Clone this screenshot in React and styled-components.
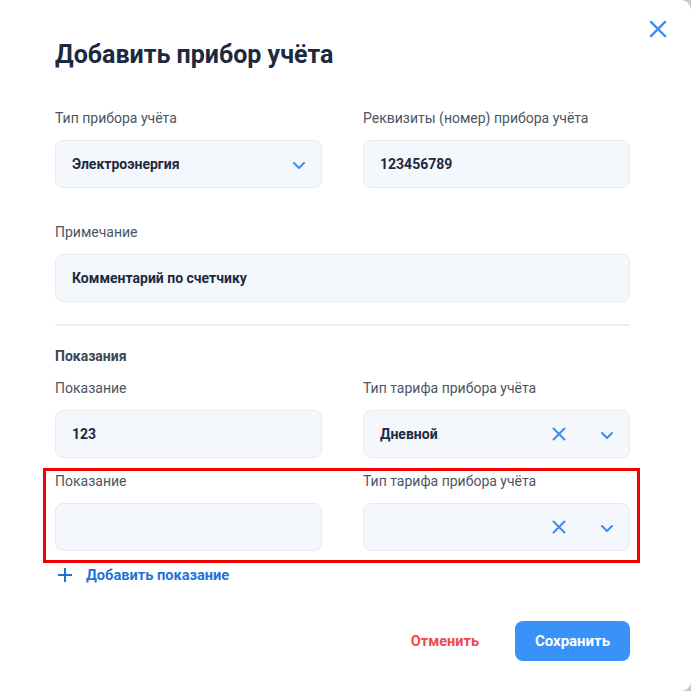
import React from "react";
import styled, { createGlobalStyle } from "styled-components";

const Global = createGlobalStyle`
  html, body { margin: 0; padding: 0; background: #c4c9d2; }
  body { font-family: Roboto, "Liberation Sans", Arial, sans-serif; }
  * { box-sizing: border-box; }
`;

const Modal = styled.div`
  position: relative;
  width: 691px;
  height: 691px;
  background: #fff;
  border-radius: 0 10px 10px 0;
  padding: 39px 61px 30px 55px;
  display: flex;
  flex-direction: column;
`;

const Close = styled.button`
  position: absolute;
  top: 20px;
  right: 24px;
  width: 18px;
  height: 18px;
  padding: 0;
  border: none;
  background: none;
  cursor: pointer;
  display: flex;
`;

const Title = styled.h1`
  margin: 0;
  font-size: 25px;
  line-height: 32px;
  font-weight: 700;
  color: #1c2a40;
`;

const Grid = styled.div`
  display: grid;
  grid-template-columns: 1fr 1fr;
  column-gap: 41px;
  margin-top: ${(p) => p.$mt || 0}px;
`;

const Field = styled.div`
  display: flex;
  flex-direction: column;
  gap: 12px;
  grid-column: ${(p) => (p.$full ? "1 / -1" : "auto")};
`;

const Label = styled.div`
  font-size: 14px;
  line-height: 20px;
  color: #4b5563;
`;

const Box = styled.div`
  height: 48px;
  border-radius: 8px;
  background: #f4f7fb;
  border: 1px solid #e6ebf1;
  display: flex;
  align-items: center;
  padding: 0 14px 0 16px;
`;

const Value = styled.div`
  flex: 1;
  font-size: 14px;
  font-weight: 700;
  color: #1c2a40;
`;

const IconSlot = styled.span`
  display: flex;
  align-items: center;
  justify-content: center;
  width: 16px;
  margin-right: ${(p) => p.$mr || 0}px;
  position: relative;
  top: ${(p) => p.$dy || 0}px;
`;

const Divider = styled.hr`
  margin: 22px 0 0;
  border: none;
  height: 2px;
  background: #efefef;
`;

const Section = styled.div`
  margin-top: 20px;
  font-size: 14px;
  line-height: 20px;
  font-weight: 700;
  color: #3a4556;
`;

const Highlight = styled.div`
  margin: 10px -10px 0 -12px;
  padding: 0 7px 9px 9px;
  border: 3px solid #f00000;
`;

const AddLink = styled.button`
  margin-top: 2px;
  align-self: flex-start;
  display: flex;
  align-items: center;
  gap: 13px;
  padding: 0 0 0 2px;
  border: none;
  background: none;
  font-family: inherit;
  font-size: 14.6px;
  font-weight: 700;
  line-height: 20px;
  color: #1d73d6;
  cursor: pointer;
`;

const Footer = styled.div`
  margin-top: auto;
  display: flex;
  justify-content: flex-end;
  align-items: center;
  gap: 36px;
`;

const CancelBtn = styled.button`
  border: none;
  background: none;
  padding: 0;
  font-family: inherit;
  font-size: 14.5px;
  font-weight: 700;
  color: #f4474c;
  cursor: pointer;
`;

const SaveBtn = styled.button`
  width: 115px;
  height: 40px;
  border: none;
  border-radius: 8px;
  background: #3892f8;
  color: #fff;
  font-family: inherit;
  font-size: 15px;
  font-weight: 700;
  cursor: pointer;
`;

const Chevron = () => (
  <svg width="14" height="9" viewBox="0 0 14 9" fill="none">
    <path d="M2 2l5 5 5-5" stroke="#3b8ff3" strokeWidth="2" strokeLinecap="round" strokeLinejoin="round" />
  </svg>
);

const Cross = ({ size = 14, w = 2 }) => (
  <svg width={size} height={size} viewBox="0 0 14 14" fill="none">
    <path d="M1.5 1.5l11 11M12.5 1.5l-11 11" stroke="#3b8ff3" strokeWidth={w} strokeLinecap="round" />
  </svg>
);

const Plus = () => (
  <svg width="16" height="16" viewBox="0 0 16 16" fill="none">
    <path d="M8 1v14M1 8h14" stroke="#1d73d6" strokeWidth="2" />
  </svg>
);

const TariffRow = ({ reading, tariff }) => (
  <Grid>
    <Field>
      <Label>Показание</Label>
      <Box>
        <Value>{reading}</Value>
      </Box>
    </Field>
    <Field>
      <Label>Тип тарифа прибора учёта</Label>
      <Box>
        <Value>{tariff}</Value>
        <IconSlot $mr={32}>
          <Cross size={14} />
        </IconSlot>
        <IconSlot $dy={1}>
          <Chevron />
        </IconSlot>
      </Box>
    </Field>
  </Grid>
);

export default function App() {
  return (
    <>
      <Global />
      <Modal>
        <Close aria-label="Закрыть">
          <Cross size={18} w={1.8} />
        </Close>
        <Title>Добавить прибор учёта</Title>
        <Grid $mt={37}>
          <Field>
            <Label>Тип прибора учёта</Label>
            <Box>
              <Value>Электроэнергия</Value>
              <IconSlot $dy={1}>
                <Chevron />
              </IconSlot>
            </Box>
          </Field>
          <Field>
            <Label>Реквизиты (номер) прибора учёта</Label>
            <Box>
              <Value>123456789</Value>
            </Box>
          </Field>
        </Grid>
        <Grid $mt={34}>
          <Field $full>
            <Label>Примечание</Label>
            <Box>
              <Value>Комментарий по счетчику</Value>
            </Box>
          </Field>
        </Grid>
        <Divider />
        <Section>Показания</Section>
        <Grid $mt={12}>
          <Field>
            <Label>Показание</Label>
            <Box>
              <Value>123</Value>
            </Box>
          </Field>
          <Field>
            <Label>Тип тарифа прибора учёта</Label>
            <Box>
              <Value>Дневной</Value>
              <IconSlot $mr={32}>
                <Cross size={14} />
              </IconSlot>
              <IconSlot $dy={1}>
                <Chevron />
              </IconSlot>
            </Box>
          </Field>
        </Grid>
        <Highlight>
          <TariffRow reading="" tariff="" />
        </Highlight>
        <AddLink>
          <Plus />
          Добавить показание
        </AddLink>
        <Footer>
          <CancelBtn>Отменить</CancelBtn>
          <SaveBtn>Сохранить</SaveBtn>
        </Footer>
      </Modal>
    </>
  );
}
